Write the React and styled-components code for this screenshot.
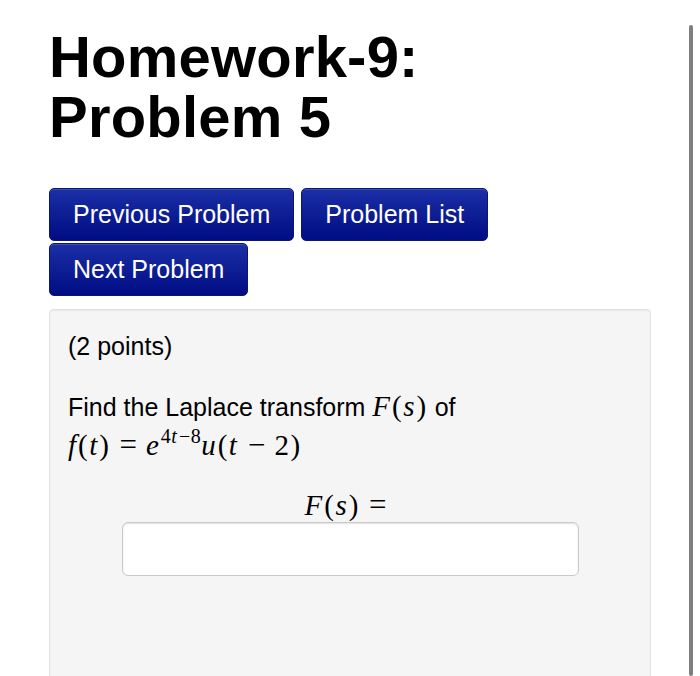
import React from 'react';
import styled, { createGlobalStyle } from 'styled-components';

const GlobalStyle = createGlobalStyle`
  html, body {
    margin: 0;
    padding: 0;
    background: #fff;
    overflow: hidden;
  }
  body {
    font-family: "Liberation Sans", Arial, Helvetica, sans-serif;
    color: #000;
  }
`;

const Page = styled.div`
  width: 602px;
  padding: 27px 0 0 49px;
`;

const Title = styled.h1`
  margin: 0;
  font-size: 58px;
  font-weight: bold;
  line-height: 60px;
  letter-spacing: 0.2px;
`;

const ButtonBar = styled.div`
  display: flex;
  flex-wrap: wrap;
  gap: 2px 7px;
  margin-top: 41px;
`;

const NavButton = styled.button`
  height: 53px;
  padding: 0 23px;
  border: 1px solid #0b1670;
  border-radius: 5px;
  background: linear-gradient(#1b2fa6, #000c83);
  color: #fff;
  font-family: inherit;
  font-size: 25px;
  box-shadow: inset 0 1px 0 rgba(255, 255, 255, 0.15);
  cursor: pointer;
`;

const Panel = styled.div`
  margin-top: 13px;
  min-height: 420px;
  padding: 19px 18px;
  background: #f5f5f5;
  border: 1px solid #e2e2e2;
  border-radius: 4px;
  box-shadow: inset 0 1px 1px rgba(0, 0, 0, 0.05);
`;

const Points = styled.p`
  margin: 0;
  font-size: 25px;
  line-height: 35px;
`;

const Statement = styled.p`
  margin: 24px 0 0;
  font-size: 25px;
  line-height: 37px;
`;

const Math = styled.span`
  font-family: "Liberation Serif", "Times New Roman", serif;
  font-size: 29px;
  letter-spacing: 1.5px;
  white-space: nowrap;
`;

const V = styled.i`
  font-style: italic;
  letter-spacing: 2px;
`;

const Op = styled.span`
  margin: 0 9px;
  font-size: 31px;
  letter-spacing: 0;
`;

const Sup = styled.sup`
  font-size: 20px;
  line-height: 0;
  letter-spacing: 0.5px;
  vertical-align: 12px;
`;

const Centered = styled.div`
  margin-top: 25px;
  text-align: center;
  line-height: 30px;
`;

const Answer = styled.input`
  display: block;
  box-sizing: border-box;
  width: 457px;
  height: 54px;
  margin: -3px auto 0;
  border: 1px solid #c9c9c9;
  border-radius: 6px;
  background: #fff;
  box-shadow: inset 0 1px 2px rgba(0, 0, 0, 0.12);
  font-size: 22px;
  outline: none;
`;

const ScrollThumb = styled.div`
  position: fixed;
  left: 689px;
  top: 25px;
  bottom: 0;
  width: 4px;
  border-radius: 2px;
  background: #7f7f7f;
`;

const App = () => {
  return (
    <>
      <GlobalStyle />
      <Page>
        <Title>
          Homework-9:
          <br />
          Problem 5
        </Title>

        <ButtonBar>
          <NavButton>Previous Problem</NavButton>
          <NavButton>Problem List</NavButton>
          <NavButton>Next Problem</NavButton>
        </ButtonBar>

        <Panel>
          <Points>(2 points)</Points>
          <Statement>
            Find the Laplace transform{' '}
            <Math>
              <V>F</V>(<V>s</V>)
            </Math>{' '}
            of
            <br />
            <Math>
              <V>f</V>(<V>t</V>)<Op>=</Op><V>e</V>
              <Sup>
                4<V>t</V>−8
              </Sup>
              <V>u</V>(<V>t</V><Op>−</Op>2)
            </Math>
          </Statement>

          <Centered>
            <Math>
              <V>F</V>(<V>s</V>)<Op>=</Op>
            </Math>
          </Centered>
          <Answer type="text" />
        </Panel>
      </Page>
      <ScrollThumb />
    </>
  );
};

export default App;
